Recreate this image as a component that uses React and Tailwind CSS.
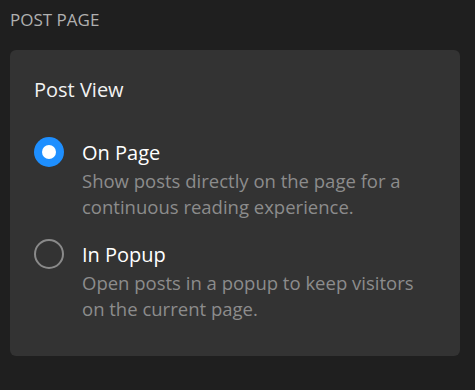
import React from "react";

function Option({ checked, title, desc }) {
  return (
    <div className="flex items-start gap-[18px]">
      {checked ? (
        <div className="w-[30px] h-[30px] shrink-0 rounded-full bg-[#1e8fff] flex items-center justify-center">
          <div className="w-[14px] h-[14px] rounded-full bg-white" />
        </div>
      ) : (
        <div className="w-[30px] h-[30px] shrink-0 rounded-full border-2 border-[#8a8a8a]" />
      )}
      <div className="pt-[4px]">
        <div className="text-[20px] leading-[24px] text-white">{title}</div>
        <div className="mt-[3px] text-[18.5px] leading-[26px] text-[#8c8c8c] whitespace-nowrap">{desc}</div>
      </div>
    </div>
  );
}

export default function App() {
  return (
    <div
      className="w-[475px] h-[390px] bg-[#1f1f1f] px-[10px] pt-[10px]"
      style={{ fontFamily: '"Open Sans", "Noto Sans", sans-serif' }}
    >
      <div className="text-[17px] leading-[20px] text-[#b0b0b0]">POST PAGE</div>
      <div className="mt-[20px] w-[450px] bg-[#333333] rounded-md pt-[28px] pb-[34px] pl-[24px] pr-[20px]">
        <div className="text-[20px] leading-[24px] text-[#f2f2f2]">Post View</div>
        <div className="mt-[35px] flex flex-col gap-[19px]">
          <Option
            checked
            title="On Page"
            desc={<>Show posts directly on the page for a<br />continuous reading experience.</>}
          />
          <Option
            title="In Popup"
            desc={<>Open posts in a popup to keep visitors<br />on the current page.</>}
          />
        </div>
      </div>
    </div>
  );
}
